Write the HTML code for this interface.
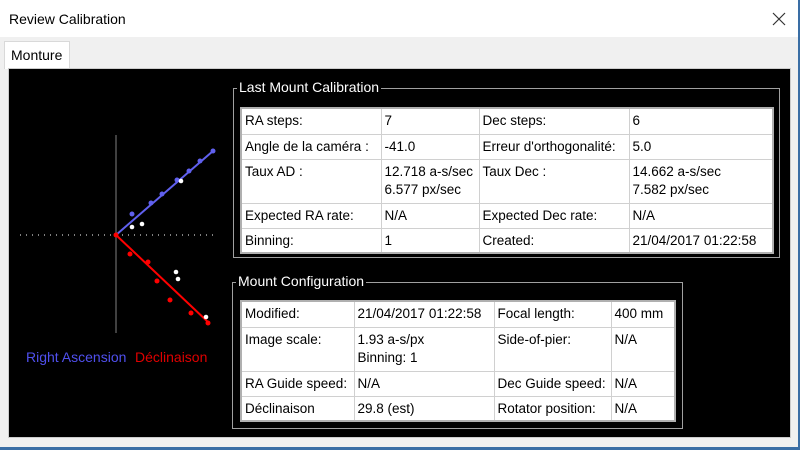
<!DOCTYPE html>
<html><head><meta charset="utf-8"><style>
*{margin:0;padding:0;box-sizing:border-box}
body{width:800px;height:450px;overflow:hidden;background:#f0f0f0;font-family:"Liberation Sans",sans-serif;font-size:13px;position:relative}
.a{position:absolute}
#title{left:0;top:0;width:800px;height:37px;background:#fff;}
#title span{position:absolute;left:9px;top:11px;font-size:14px;color:#000}
#tab{left:4px;top:41px;width:66px;height:28px;background:#fff;border:1px solid #d9d9d9;border-bottom:none;padding:5px 0 0 6px;font-size:14px}
#panel{left:8px;top:68px;width:783px;height:370px;background:#000;border:1px solid #ccc}
.gb{border:1px solid #a0a0a0}
.gt{background:#000;color:#fff;font-size:14px;padding:0 2px}
table{position:absolute;border-collapse:collapse;background:#fff;border:2px solid #b0b0b0}
td{border:1px solid #d0d0d0;padding:3px 3px 0 3px;vertical-align:top;font-size:13.5px;line-height:18px;white-space:nowrap;color:#000}
#wb{right:0;top:0;width:2px;height:450px;background:#3a6ea5}
#bb{left:0;bottom:0;width:800px;height:3px;background:#3a6ea5}
</style></head><body>
<div id="title" class="a"><span>Review Calibration</span></div>
<svg class="a" style="left:772px;top:12px" width="14" height="14"><path d="M1 1L13 13M13 1L1 13" stroke="#333" stroke-width="1.2"/></svg>
<div id="tab" class="a">Monture</div>
<div id="panel" class="a"></div>
<svg class="a" style="left:0;top:0" width="800" height="450">
<line x1="116" y1="135" x2="116" y2="333" stroke="#555" stroke-width="1.5"/>
<line x1="20" y1="235" x2="213" y2="235" stroke="#aaa" stroke-width="1.5" stroke-dasharray="1 5"/>
<line x1="116" y1="235" x2="213" y2="151" stroke="#6060ee" stroke-width="2"/>
<line x1="116" y1="235" x2="209" y2="323" stroke="#f00" stroke-width="2"/>
<g fill="#6060ee"><circle cx="132" cy="214" r="2.5"/><circle cx="151" cy="203" r="2.5"/><circle cx="162" cy="194" r="2.5"/><circle cx="177" cy="180" r="2.5"/><circle cx="189" cy="171" r="2.5"/><circle cx="200" cy="161" r="2.5"/><circle cx="213" cy="151" r="2.5"/></g>
<g fill="#fff"><circle cx="132" cy="227" r="2.3"/><circle cx="142" cy="224" r="2.3"/><circle cx="181" cy="181" r="2.3"/><circle cx="176" cy="272" r="2.3"/><circle cx="178" cy="279" r="2.3"/><circle cx="206" cy="317" r="2.3"/></g>
<g fill="#f00"><circle cx="116" cy="235" r="2.5"/><circle cx="130" cy="254" r="2.5"/><circle cx="148" cy="262" r="2.5"/><circle cx="157" cy="281" r="2.5"/><circle cx="170" cy="300" r="2.5"/><circle cx="191" cy="313" r="2.5"/><circle cx="208" cy="323" r="2.5"/></g>
</svg>
<div class="a" style="left:26px;top:349px;font-size:14px;color:#5050ee">Right Ascension</div>
<div class="a" style="left:135px;top:349px;font-size:14px;color:#e00000">Déclinaison</div>

<div class="a gb" style="left:233px;top:88px;width:547px;height:170px"></div>
<div class="a gt" style="left:237px;top:79px">Last Mount Calibration</div>
<table style="left:240px;top:107px;width:534px">
<colgroup><col style="width:140px"><col style="width:98px"><col style="width:150px"><col></colgroup>
<tr style="height:26px"><td>RA steps:</td><td>7</td><td>Dec steps:</td><td>6</td></tr>
<tr style="height:25px"><td>Angle de la caméra :</td><td>-41.0</td><td>Erreur d'orthogonalité:</td><td>5.0</td></tr>
<tr style="height:44px"><td>Taux AD :</td><td>12.718 a-s/sec<br>6.577 px/sec</td><td>Taux Dec :</td><td>14.662 a-s/sec<br>7.582 px/sec</td></tr>
<tr style="height:25px"><td>Expected RA rate:</td><td>N/A</td><td>Expected Dec rate:</td><td>N/A</td></tr>
<tr style="height:25px"><td>Binning:</td><td>1</td><td>Created:</td><td>21/04/2017 01:22:58</td></tr>
</table>

<div class="a gb" style="left:232px;top:282px;width:451px;height:147px"></div>
<div class="a gt" style="left:236px;top:273px">Mount Configuration</div>
<table style="left:240px;top:300px;width:436px">
<colgroup><col style="width:113px"><col style="width:140px"><col style="width:117px"><col></colgroup>
<tr style="height:26px"><td>Modified:</td><td>21/04/2017 01:22:58</td><td>Focal length:</td><td>400 mm</td></tr>
<tr style="height:44px"><td>Image scale:</td><td>1.93 a-s/px<br>Binning: 1</td><td>Side-of-pier:</td><td>N/A</td></tr>
<tr style="height:25px"><td>RA Guide speed:</td><td>N/A</td><td>Dec Guide speed:</td><td>N/A</td></tr>
<tr style="height:25px"><td>Déclinaison</td><td>29.8 (est)</td><td>Rotator position:</td><td>N/A</td></tr>
</table>
<div id="wb" class="a"></div><div id="bb" class="a"></div>
</body></html>
